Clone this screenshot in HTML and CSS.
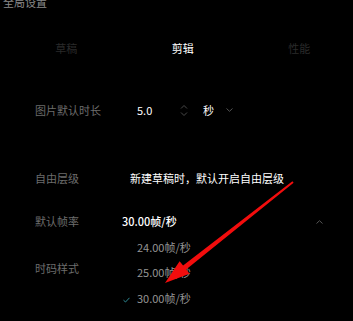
FILE: index.html
```
<!DOCTYPE html>
<html lang="zh">
<head>
<meta charset="utf-8">
<link rel="stylesheet" href="styles.css">
</head>
<body>
<div class="page">
  <div class="title">全局设置</div>
  <div class="tabs">
    <span class="tab">草稿</span>
    <span class="tab active">剪辑</span>
    <span class="tab">性能</span>
  </div>
  <div class="rows">
    <div class="row r1">
      <span class="label">图片默认时长</span>
      <div class="ctrl">
        <div class="num">
          <span class="val">5.0</span>
          <svg class="spin" width="8" height="13" viewBox="0 0 8 13"><path d="M1 4.5 L4 1.5 L7 4.5 M1 8.5 L4 11.5 L7 8.5" fill="none" stroke="#4a4a4a" stroke-width="1"/></svg>
        </div>
        <div class="unit">
          <span class="val">秒</span>
          <svg class="chev" width="7" height="4" viewBox="0 0 7 4"><path d="M0.5 0.5 L3.5 3.3 L6.5 0.5" fill="none" stroke="#555" stroke-width="1"/></svg>
        </div>
      </div>
    </div>
    <div class="row r2">
      <span class="label">自由层级</span>
      <div class="ctrl"><span class="val desc">新建草稿时，默认开启自由层级</span></div>
    </div>
    <div class="row r3">
      <span class="label">默认帧率</span>
      <div class="ctrl">
        <div class="select">
          <span class="val strong">30.00帧/秒</span>
          <svg class="chev" width="7" height="4" viewBox="0 0 7 4"><path d="M0.5 3.5 L3.5 0.7 L6.5 3.5" fill="none" stroke="#555" stroke-width="1"/></svg>
          <ul class="menu">
            <li class="opt">24.00帧/秒</li>
            <li class="opt">25.00帧/秒</li>
            <li class="opt sel"><svg class="check" width="7" height="6" viewBox="0 0 7 6"><path d="M0.5 3.2 L2.5 5 L6.5 0.8" fill="none" stroke="#2f8a94" stroke-width="1"/></svg>30.00帧/秒</li>
          </ul>
        </div>
      </div>
    </div>
    <div class="row r4">
      <span class="label">时码样式</span>
    </div>
  </div>
  <svg class="arrow" width="353" height="321" viewBox="0 0 353 321">
    <polygon points="165,289 189.6,279.8 186.1,275.5 293.6,188.8 292.4,187.2 183.1,271.5 179.6,267.2" fill="#f20d0d"/>
  </svg>
</div>
</body>
</html>
```
FILE: styles.css
```
* { box-sizing: border-box; }
html, body {
  margin: 0;
  padding: 0;
  background: #000;
}
body {
  width: 353px;
  height: 321px;
  overflow: hidden;
  font-family: "Noto Sans CJK SC", "Noto Sans", sans-serif;
  font-size: 11px;
  line-height: 16px;
  color: #fff;
}
.page {
  position: relative;
  width: 353px;
  height: 321px;
}
.title {
  margin-top: -6px;
  padding-left: 3px;
  color: #8a8a8a;
}
.tabs {
  display: grid;
  grid-template-columns: repeat(3, 116.5px);
  margin-left: 8px;
  margin-top: 29.5px;
}
.tab {
  text-align: center;
  color: #2a2a2a;
}
.tab.active { color: #fff; }
.rows {
  display: flex;
  flex-direction: column;
  padding-left: 35px;
}
.row {
  display: flex;
  align-items: center;
  height: 16px;
}
.r1 { margin-top: 46.5px; }
.r2 { margin-top: 52px; }
.r3 { margin-top: 27px; }
.r4 { margin-top: 30.5px; }
.label {
  width: 80px;
  flex: none;
  color: #6c6c6c;
}
.ctrl {
  display: flex;
  align-items: center;
}
.num {
  display: flex;
  align-items: center;
  width: 80px;
  padding-left: 22px;
}
.num .val { width: 43px; }
.spin { display: block; }
.unit {
  display: flex;
  align-items: center;
  margin-left: 8px;
  gap: 12px;
}
.chev { display: block; }
.desc { margin-left: 15px; }
.select {
  position: relative;
  display: flex;
  align-items: center;
  justify-content: space-between;
  width: 215px;
  padding-left: 7px;
  padding-right: 7px;
}
.strong { font-weight: 500; }
.select .chev { margin-top: 2px; }
.menu {
  position: absolute;
  left: 0;
  top: 100%;
  width: 215px;
  margin: 0;
  padding: 5.75px 0 4px 22px;
  list-style: none;
  background: #000;
}
.opt {
  position: relative;
  height: 25.5px;
  line-height: 25.5px;
  color: #959595;
}
.check {
  position: absolute;
  left: -14px;
  top: 11px;
}
.arrow {
  position: absolute;
  left: 0;
  top: 0;
  pointer-events: none;
}
```
